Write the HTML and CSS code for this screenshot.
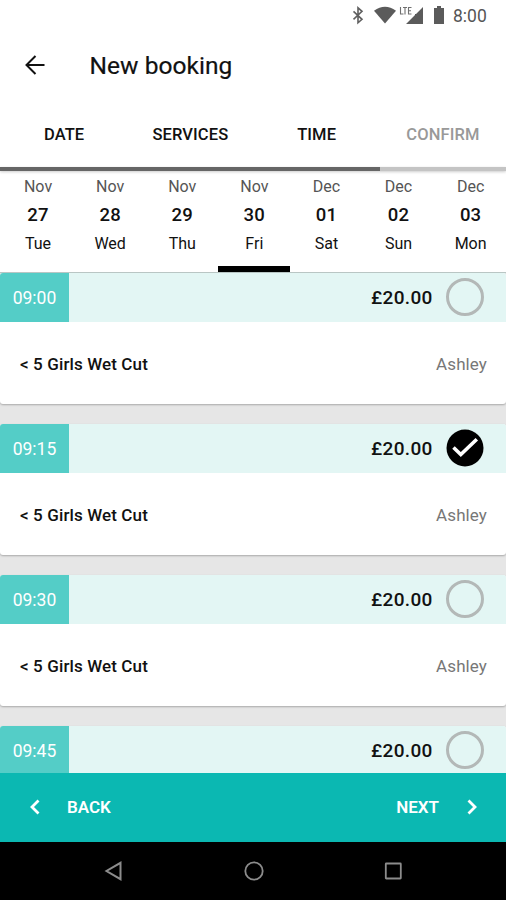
FILE: index.html
```html
<!DOCTYPE html>
<html lang="en">
<head>
<meta charset="utf-8">
<title>New booking</title>
<link rel="stylesheet" href="styles.css">
</head>
<body>
<div class="screen">
  <div class="status">
    <svg class="status-icons" width="100" height="32" viewBox="0 0 100 32">
      <path d="M3.5 11.5L12 19.5L8 23V8L12 11.5L3.5 19.5" transform="translate(0 -.2)" fill="none" stroke="#606060" stroke-width="1.6"/>
      <path d="M24 10.800Q35 2.800 46 10.800L35 23.400Z" fill="#5b5b5b"/>
      <path d="M50.500 7v7h3M53 7.500h4M55 7.500v7M61.500 7.500h-3v6.500h3M58.500 10.700h2.500" fill="none" stroke="#707070" stroke-width="1.100"/>
      <path d="M73 7v17H56l9-9V14h1z" fill="#5b5b5b"/>
      <path d="M84 8H87V6h4v2H94v16H84z" fill="#5b5b5b"/>
    </svg>
    <span class="clock">8:00</span>
  </div>
  <header class="appbar">
    <svg class="arrow" width="20" height="20" viewBox="0 0 20 20"><path d="M19.500 10H2M10.500 1L1.500 10L10.500 19" fill="none" stroke="#111" stroke-width="2"/></svg>
    <h1>New booking</h1>
  </header>
  <nav class="tabs">
    <span>DATE</span><span>SERVICES</span><span>TIME</span><span class="pending">CONFIRM</span>
  </nav>
  <div class="progress"><div class="progress-done"></div></div>
  <div class="days">
    <div class="day"><span class="month">Nov</span><b>27</b><span>Tue</span></div>
    <div class="day"><span class="month">Nov</span><b>28</b><span>Wed</span></div>
    <div class="day"><span class="month">Nov</span><b>29</b><span>Thu</span></div>
    <div class="day selected"><span class="month">Nov</span><b>30</b><span>Fri</span></div>
    <div class="day"><span class="month">Dec</span><b>01</b><span>Sat</span></div>
    <div class="day"><span class="month">Dec</span><b>02</b><span>Sun</span></div>
    <div class="day"><span class="month">Dec</span><b>03</b><span>Mon</span></div>
  </div>
  <main class="slots">
    <section class="slot">
      <div class="slot-head"><span class="time">09:00</span><span class="price">£20.00</span><i class="radio"></i></div>
      <div class="slot-body"><span class="service">&lt; 5 Girls Wet Cut</span><span class="staff">Ashley</span></div>
    </section>
    <section class="slot">
      <div class="slot-head"><span class="time">09:15</span><span class="price">£20.00</span><svg class="check" width="38" height="38" viewBox="0 0 38 38"><circle cx="19" cy="19" r="18.500" fill="#000"/><path d="M7.500 18.500L14.800 25.500L30.800 10.200" fill="none" stroke="#fff" stroke-width="3.600"/></svg></div>
      <div class="slot-body"><span class="service">&lt; 5 Girls Wet Cut</span><span class="staff">Ashley</span></div>
    </section>
    <section class="slot">
      <div class="slot-head"><span class="time">09:30</span><span class="price">£20.00</span><i class="radio"></i></div>
      <div class="slot-body"><span class="service">&lt; 5 Girls Wet Cut</span><span class="staff">Ashley</span></div>
    </section>
    <section class="slot">
      <div class="slot-head"><span class="time">09:45</span><span class="price">£20.00</span><i class="radio"></i></div>
    </section>
  </main>
  <footer class="actions">
    <svg width="10" height="16" viewBox="0 0 10 16"><path d="M8.500 1.500L2 8L8.500 14.500" fill="none" stroke="#fff" stroke-width="2.800"/></svg>
    <span class="back">BACK</span>
    <span class="next">NEXT</span>
    <svg width="10" height="16" viewBox="0 0 10 16"><path d="M1.500 1.500L8 8L1.500 14.500" fill="none" stroke="#fff" stroke-width="2.800"/></svg>
  </footer>
  <div class="navbar">
    <svg width="20" height="22" viewBox="0 0 20 22"><path d="M16.500 2.800V19.200L2.500 11Z" fill="none" stroke="#8c8c8c" stroke-width="2"/></svg>
    <svg width="20" height="22" viewBox="0 0 20 22"><circle cx="10" cy="11" r="8.700" fill="none" stroke="#8c8c8c" stroke-width="1.800"/></svg>
    <svg width="20" height="22" viewBox="0 0 20 22"><rect x="2.800" y="3.500" width="15" height="15" rx=".5" fill="none" stroke="#8c8c8c" stroke-width="1.800"/></svg>
  </div>
</div>
</body>
</html>
```
FILE: styles.css
```css
* { box-sizing: border-box; }
body { margin: 0; background: #fff; font-family: Roboto, "Liberation Sans", sans-serif; color: #111; }
.screen { width: 506px; height: 900px; overflow: hidden; display: flex; flex-direction: column; white-space: nowrap; }
.status { height: 32px; display: flex; justify-content: flex-end; align-items: center; padding-right: 19px; flex: none; }
.status-icons { margin-right: 3px; }
.clock { width: 34px; font-size: 17.500px; color: #555; }
.appbar { height: 68px; flex: none; display: flex; align-items: center; padding-left: 25px; }
.arrow { margin-top: -3px; }
h1 { margin: 0 0 0 44.500px; font-size: 24.500px; line-height: 32px; font-weight: 400; letter-spacing: .05px; -webkit-text-stroke: .2px #111; }
.tabs { height: 67px; flex: none; display: grid; grid-template-columns: repeat(4, 1fr); align-items: center; text-align: center; font-size: 16.500px; font-weight: 500; letter-spacing: .1px; padding: 1px 0 0 1px; }
.pending { color: #999; }
.progress { height: 4px; flex: none; background: #c4c4c4; box-shadow: 0 1px 3px #0003; position: relative; }
.progress-done { width: 380px; height: 4px; background: #666; }
.days { height: 102px; flex: none; display: grid; grid-template-columns: repeat(7, 72.100px); padding-left: 2px; border-bottom: 1px solid #b9c6c4; }
.day { display: flex; flex-direction: column; align-items: center; padding-top: 2px; font-size: 16px; line-height: 28.300px; border-bottom: 6px solid transparent; }
.day b { font-size: 18.500px; font-weight: 500; letter-spacing: .2px; }
.month { color: #555; }
.selected { border-color: #000; }
.slots { height: 500px; flex: none; overflow: hidden; background: #e6e6e6; display: flex; flex-direction: column; gap: 20px; }
.slot { height: 131px; flex: none; background: #fff; border-radius: 3px; box-shadow: 0 1px 2px #0004; overflow: hidden; }
.slot-head { height: 49px; background: #e3f6f4; display: flex; align-items: center; }
.time { width: 69px; height: 49px; background: #54cdc7; color: #fff; line-height: 51px; text-align: center; font-size: 17.500px; }
.price { margin-left: auto; width: 62px; font-size: 19px; font-weight: 500; letter-spacing: .35px; line-height: 50px; }
.radio { width: 38px; height: 38px; margin: -1px 22px 0 13px; border: 3px solid #b3b8b7; border-radius: 50%; }
.check { margin: -1px 22px 0 13px; }
.slot-body { height: 82px; display: flex; align-items: center; justify-content: space-between; padding: 2px 19px 0 20px; font-size: 17px; }
.service { font-weight: 500; letter-spacing: .12px; }
.staff { color: #777; letter-spacing: .1px; }
.actions { height: 69px; flex: none; background: #0bb8b2; color: #fff; display: flex; align-items: center; padding: 0 29px 2px 30px; font-size: 17px; font-weight: 600; }
.back { margin-left: 27px; }
.next { margin-left: auto; margin-right: 28px; }
.navbar { height: 58px; flex: none; background: #000; display: flex; justify-content: space-between; align-items: center; padding: 0 103px 0 104px; }
```
